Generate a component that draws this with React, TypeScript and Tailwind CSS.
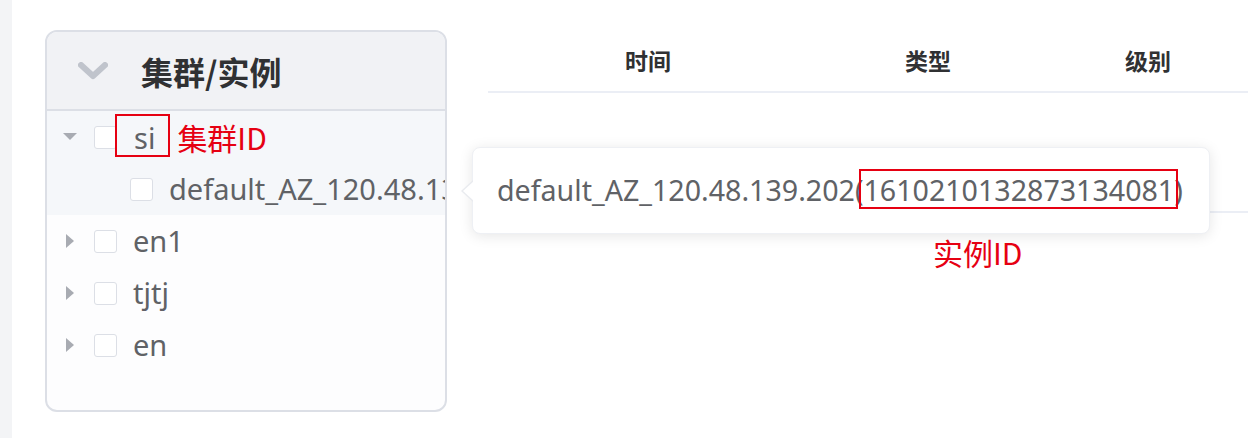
import React from "react";

const latin = { fontFamily: '"Noto Sans", "Noto Sans CJK SC", sans-serif' };
const cjk = { fontFamily: '"Noto Sans CJK SC", "Noto Sans", sans-serif' };

function Caret({ open }: { open?: boolean }) {
  return (
    <div className="w-[30px] flex items-center justify-center">
      {open ? (
        <svg width="14" height="8" viewBox="0 0 14 8">
          <path d="M0 0 L14 0 L7 7 Z" fill="#a8abb2" />
        </svg>
      ) : (
        <svg width="8" height="14" viewBox="0 0 8 14">
          <path d="M0 0 L8 7 L0 14 Z" fill="#a8abb2" />
        </svg>
      )}
    </div>
  );
}

function Box() {
  return <div className="w-[23px] h-[23px] rounded-[3px] border-[1.5px] border-[#dcdfe6] bg-white shrink-0" />;
}

export default function App() {
  return (
    <div className="relative flex w-[1248px] h-[438px] bg-white overflow-hidden">
      <div className="w-[12px] h-full bg-[#f3f4f6]" />
      {/* left panel */}
      <div className="ml-[33px] mt-[30px] w-[402px] h-[382px] rounded-[12px] border-2 border-[#dcdfe6] bg-[#fdfdfe] overflow-hidden flex flex-col shrink-0">
        <div className="h-[79px] bg-[#f1f2f5] border-b-2 border-[#dcdfe6] flex items-center pl-[31px]">
          <svg width="30" height="18" viewBox="0 0 30 18">
            <path d="M3 3 L15 14 L27 3" stroke="#c0c4cc" strokeWidth="6" fill="none" strokeLinecap="round" strokeLinejoin="round" />
          </svg>
          <span className="ml-[33px] text-[32px] font-bold text-[#303133] leading-none" style={cjk}>
            集群/实例
          </span>
        </div>
        <div className="flex flex-col text-[29px] text-[#606266]" style={latin}>
          <div className="bg-[#f5f7fa]">
            <div className="h-[52px] flex items-center pl-[8px]">
              <Caret open />
              <div className="ml-[9px]"><Box /></div>
              <span className="relative ml-[17px] leading-none">
                si
                <span className="absolute left-[-19px] top-[-9px] w-[55px] h-[43px] border-2 border-[#e60012]" />
              </span>
              <span className="ml-[22px] text-[30px] text-[#e60012] leading-none" style={cjk}>集群ID</span>
            </div>
            <div className="h-[52px] flex items-center pl-[83px] whitespace-nowrap">
              <Box />
              <span className="ml-[16px]">default_AZ_120.48.139.202</span>
            </div>
          </div>
          {["en1", "tjtj", "en"].map((t) => (
            <div key={t} className="h-[52px] flex items-center pl-[8px]">
              <Caret />
              <div className="ml-[9px]"><Box /></div>
              <span className="ml-[16px]">{t}</span>
            </div>
          ))}
        </div>
      </div>
      {/* right table */}
      <div className="ml-[41px] mt-[30px] flex-1 flex flex-col">
        <div className="h-[63px] flex items-center border-b-2 border-[#ebeef5] text-[23px] font-bold text-[#303133]" style={cjk}>
          <div className="w-[320px] text-center">时间</div>
          <div className="w-[240px] text-center">类型</div>
          <div className="w-[200px] text-center">级别</div>
        </div>
        <div className="h-[120px] border-b-2 border-[#ebeef5]" />
      </div>
      {/* tooltip overlay */}
      <div className="absolute left-[472px] top-[147px] w-[738px] h-[87px] bg-white rounded-[8px] border border-[#eef0f4] shadow-[0_2px_14px_rgba(0,0,0,0.10)] flex items-center pl-[24px] text-[28.6px] text-[#606266] whitespace-nowrap" style={latin}>
        <div className="absolute left-[-12px] top-[32px] w-0 h-0 border-y-[11px] border-y-transparent border-r-[12px] border-r-[#e9ebef]" />
        <div className="absolute left-[-10px] top-[33px] w-0 h-0 border-y-[10px] border-y-transparent border-r-[11px] border-r-white" />
        <span className="leading-none">
          default_AZ_120.48.139.202(
          <span className="relative">
            1610210132873134081
            <span className="absolute left-[-4px] top-[-1px] right-[-4px] bottom-[0px] border-2 border-[#e60012]" />
          </span>
          )
        </span>
      </div>
      <div className="absolute left-[933px] top-[237px] text-[30px] text-[#e60012] leading-none" style={cjk}>
        实例ID
      </div>
    </div>
  );
}
